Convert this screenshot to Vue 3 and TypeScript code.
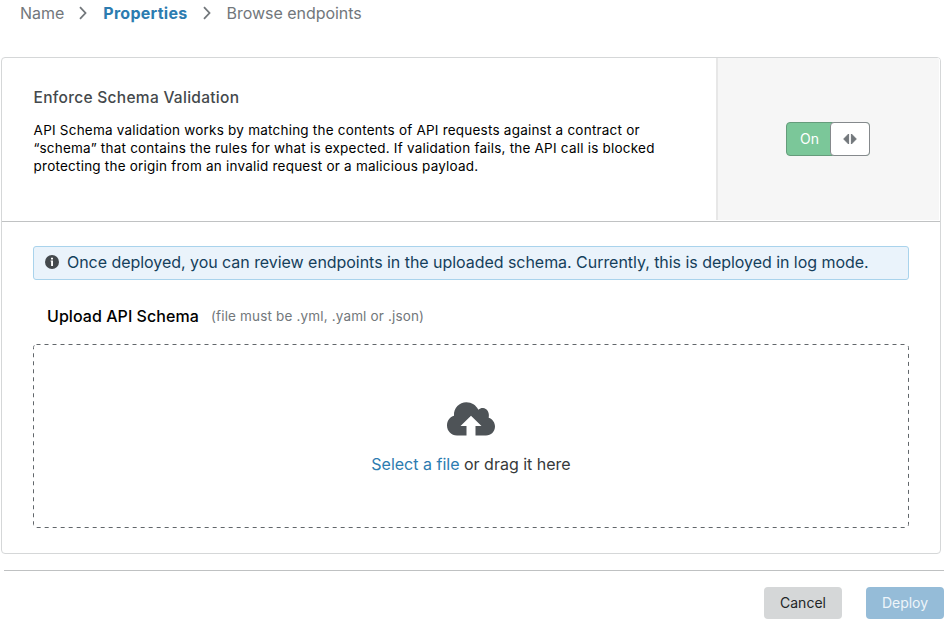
<script setup lang="ts">
import { ref } from 'vue'

const steps = ['Name', 'Properties', 'Browse endpoints']
const current = ref(1)
const enforced = ref(true)
</script>

<template>
  <main class="page">
    <nav class="steps">
      <template v-for="(step, i) in steps" :key="step">
        <svg v-if="i > 0" class="chevron" width="8" height="14" viewBox="0 0 8 14">
          <path d="M1 1.2 6.5 7 1 12.8" />
        </svg>
        <span class="step" :class="{ active: i === current }">{{ step }}</span>
      </template>
    </nav>

    <section class="card">
      <div class="setting">
        <div class="info">
          <h2 class="title">Enforce Schema Validation</h2>
          <p class="text">
            API Schema validation works by matching the contents of API requests against a contract or<br />
            “schema” that contains the rules for what is expected. If validation fails, the API call is blocked<br />
            protecting the origin from an invalid request or a malicious payload.
          </p>
        </div>
        <div class="control">
          <button class="toggle" type="button" @click="enforced = !enforced">
            <span class="state">{{ enforced ? 'On' : 'Off' }}</span>
            <span class="handle">
              <svg width="14" height="12" viewBox="0 0 14 12">
                <path d="M5.600 1v10L.7 6zM8.400 1v10L13.300 6z" />
              </svg>
            </span>
          </button>
        </div>
      </div>

      <div class="upload">
        <div class="notice">
          <svg class="notice-icon" width="14" height="14" viewBox="0 0 14 14">
            <circle cx="7" cy="7" r="7" fill="#44494d" />
            <path d="M6 2.700h2v1.700H6zM5.600 5.500H8v5.500H6.100V6.600h-.5z" fill="#fff" />
          </svg>
          <span class="notice-text">Once deployed, you can review endpoints in the uploaded schema. Currently, this is deployed in log mode.</span>
        </div>
        <div class="label">
          <span class="label-name">Upload API Schema</span>
          <span class="label-hint">(file must be .yml, .yaml or .json)</span>
        </div>
        <div class="dropzone">
          <svg class="outline" width="876" height="184" viewBox="0 0 876 184">
            <rect x=".5" y=".5" width="875" height="183" rx="3" />
          </svg>
          <svg class="cloud" width="48" height="34" viewBox="0 0 48 34">
            <path d="M10 33.5C4.300 33.500 0 29 0 23.500C0 18.500 3 14.800 7 13.700C6.500 6 12.500.3 19.300.3C24.800.3 29 3.200 31.300 7.800C33 6.200 34.500 5.900 36 6C40 6.300 42.800 10.500 41.700 15.700C45.500 17 48 20.500 48 24.500C48 29.500 44 33.500 39 33.500H28.500V24H34.500L24 13.800L13.500 24H19.500V33.500Z" />
          </svg>
          <div class="prompt"><a class="link">Select a file</a> or drag it here</div>
        </div>
      </div>
    </section>

    <footer class="actions">
      <button class="btn cancel" type="button">Cancel</button>
      <button class="btn deploy" type="button">Deploy</button>
    </footer>
  </main>
</template>

<style>
body {
  background: #fff;
}
</style>

<style scoped>
.page {
  width: 949px;
  height: 626px;
  box-sizing: border-box;
  overflow: hidden;
  font-family: Inter, "Liberation Sans", sans-serif;
  color: #000;
}
.steps {
  display: flex;
  align-items: center;
  height: 26px;
  padding-left: 20px;
  font-size: 16px;
  letter-spacing: -0.03px;
  color: #72777b;
}
.step {
  line-height: 20px;
  margin-top: -1px;
}
.chevron {
  margin: 0 16px 0 15px;
  fill: none;
  stroke: #72777b;
  stroke-width: 1.8;
}
.active {
  font-weight: 700;
  letter-spacing: 0.28px;
  color: #2c7cb0;
}
.card {
  box-sizing: border-box;
  width: 940px;
  height: 497px;
  margin: 31px 0 0 1px;
  border: 1px solid #d5d7d8;
  border-radius: 4px;
}
.setting {
  display: flex;
  height: 163px;
  border-bottom: 1px solid #c0c2c3;
}
.info {
  flex: 1;
  padding: 30px 0 0 31.6px;
}
.title {
  margin: 0;
  font-size: 15.5px;
  line-height: 20px;
  font-weight: 500;
  letter-spacing: 0.29px;
  color: #44494c;
}
.text {
  margin: 13px 0 0;
  font-size: 13.5px;
  letter-spacing: 0.22px;
  line-height: 18px;
  white-space: nowrap;
}
.control {
  box-sizing: border-box;
  width: 224px;
  height: 162px;
  display: flex;
  justify-content: center;
  align-items: center;
  border-left: 2px solid #e7e7e7;
  border-right: 1px solid #fff;
  background: #f6f6f6;
  border-radius: 0 3px 0 0;
}
.toggle {
  box-sizing: border-box;
  display: flex;
  width: 84px;
  height: 34px;
  margin-left: -2px;
  padding: 0;
  border: 1px solid #659c7b;
  border-radius: 4px;
  background: #7bc799;
  color: #fff;
  font: 14px Inter, sans-serif;
}
.state {
  flex: 1;
  align-self: center;
  padding: 0 0 1px 2px;
}
.handle {
  box-sizing: border-box;
  display: flex;
  align-items: center;
  justify-content: center;
  width: 40px;
  height: 34px;
  margin: -1px;
  border: 1px solid #85898c;
  border-radius: 4px;
  background: #fff;
  fill: #72777b;
  stroke: #72777b;
  stroke-linejoin: round;
}
.handle svg {
  flex: none;
}
.upload {
  padding: 24px 31px 0;
}
.notice {
  box-sizing: border-box;
  display: flex;
  align-items: center;
  height: 34px;
  padding-left: 11px;
  border: 1px solid #a9d3ec;
  border-radius: 3px;
  background: #eaf3fb;
  color: #153f5b;
}
.notice-icon {
  margin-top: -2px;
}
.notice-text {
  margin: -2px 0 0 8px;
  font-size: 16px;
  line-height: 20px;
  letter-spacing: -0.043px;
  white-space: nowrap;
}
.label {
  display: flex;
  height: 20px;
  padding: 26px 0 18px 14px;
  line-height: 20px;
}
.label-name {
  font-size: 16px;
  font-weight: 500;
  letter-spacing: 0.05px;
}
.label-hint {
  margin-left: 12.2px;
  font-size: 13.5px;
  letter-spacing: 0.16px;
  color: #72777b;
}
.dropzone {
  position: relative;
  box-sizing: border-box;
  display: flex;
  flex-direction: column;
  align-items: center;
  height: 184px;
  padding-top: 58px;
}
.outline {
  position: absolute;
  inset: 0;
  fill: none;
  stroke: #62676b;
  stroke-dasharray: 4 4;
}
.cloud {
  fill: #4e5357;
}
.prompt {
  margin-top: 18px;
  font-size: 16px;
  line-height: 20px;
  color: #36393a;
}
.link {
  color: #2c7cb0;
}
.actions {
  display: flex;
  justify-content: flex-end;
  gap: 24px;
  width: 940px;
  margin: 16px 0 0 4px;
  padding-top: 16px;
  border-top: 1px solid #bfc1c2;
}
.btn {
  width: 78px;
  height: 32px;
  padding: 0 0 2px;
  border: 0;
  border-radius: 4px;
  font: 14px Inter, sans-serif;
}
.cancel {
  background: #d5d7d8;
  color: #222527;
}
.deploy {
  background: #95bcd8;
  color: #eef5fa;
}
</style>
